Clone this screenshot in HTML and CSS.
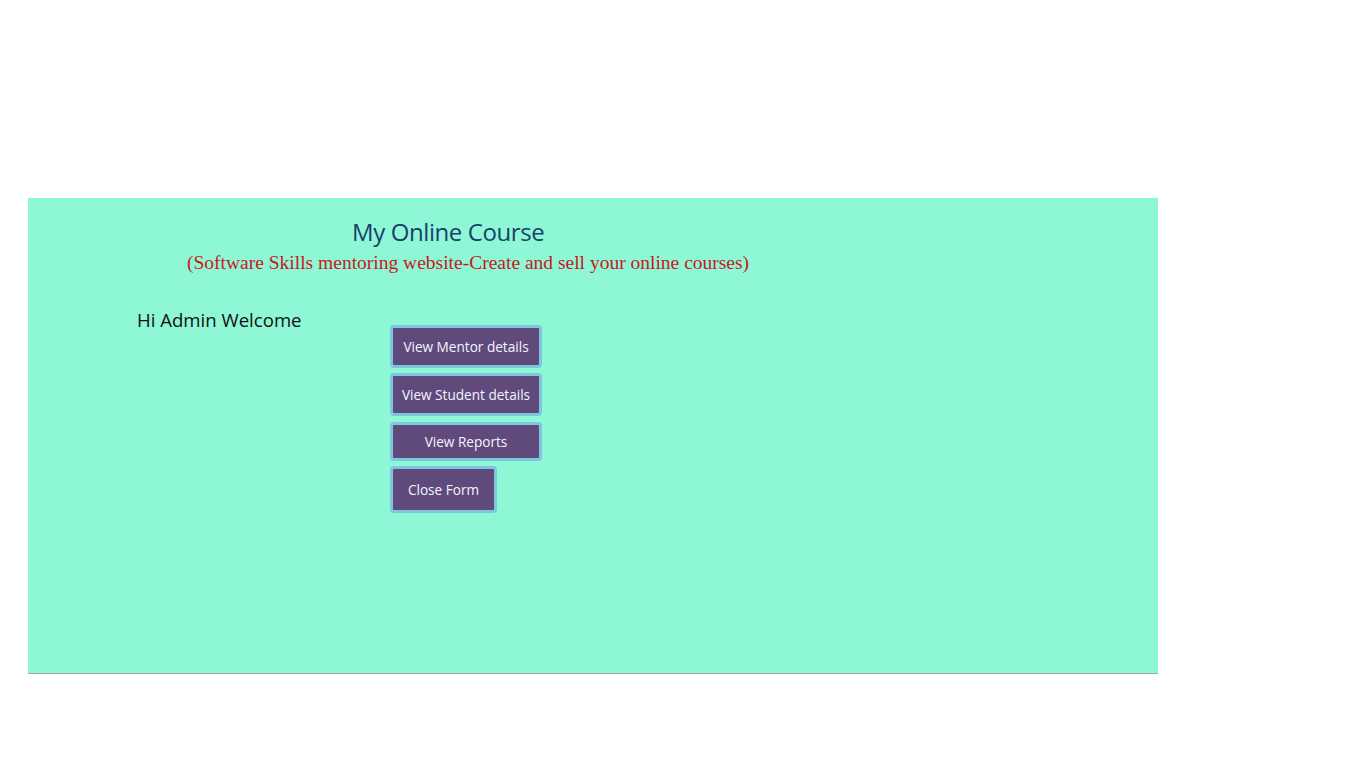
FILE: index.html
```html
<!DOCTYPE html>
<html>
<head>
<meta charset="utf-8">
<link rel="stylesheet" href="styles.css">
</head>
<body>
<div class="panel">
  <div class="header">
    <h1 class="title">My Online Course</h1>
    <p class="subtitle">(Software Skills mentoring website-Create and sell your online courses)</p>
  </div>
  <div class="content">
    <div class="welcome">Hi Admin Welcome</div>
    <div class="buttons">
      <button class="btn btn-mentor">View Mentor details</button>
      <button class="btn btn-student">View Student details</button>
      <button class="btn btn-reports">View Reports</button>
      <button class="btn btn-close">Close Form</button>
    </div>
  </div>
</div>
</body>
</html>
```
FILE: styles.css
```css
html, body {
  margin: 0;
  padding: 0;
  background: #ffffff;
}
body {
  padding: 198px 0 0 28px;
  font-family: "Open Sans", sans-serif;
}
.panel {
  width: 1130px;
  height: 475px;
  background: #8ef7d6;
  border-bottom: 1px solid #a0a8a8;
  box-sizing: content-box;
}
.header {
  padding-top: 18px;
  display: flex;
  flex-direction: column;
  align-items: flex-start;
}
.title {
  margin: 0 0 0 324px;
  font-family: "Open Sans", sans-serif;
  font-weight: 400;
  font-size: 24px;
  line-height: 32px;
  color: #1b3f6b;
  letter-spacing: -0.4px;
}
.subtitle {
  margin: 3px 0 0 159px;
  font-family: "Liberation Serif", serif;
  font-size: 19.5px;
  line-height: 24px;
  color: #c8191c;
}
.content {
  display: flex;
  align-items: flex-start;
  padding-top: 50px;
}
.welcome {
  margin: -17px 0 0 109px;
  width: 253px;
  font-family: "Open Sans", sans-serif;
  font-size: 18.6px;
  line-height: 24px;
  color: #111;
}
.buttons {
  display: flex;
  flex-direction: column;
  align-items: flex-start;
}
.btn {
  box-sizing: border-box;
  background: #604a7b;
  color: #f4f4ff;
  border: 3px solid #7ec6df;
  border-radius: 4px;
  font-family: "Open Sans", sans-serif;
  font-size: 13.6px;
  padding: 0;
  width: 152px;
}
.btn-mentor { height: 43px; }
.btn-student { height: 43px; margin-top: 5px; }
.btn-reports { height: 39px; margin-top: 6px; }
.btn-close { height: 47px; margin-top: 5px; width: 107px; }
```
